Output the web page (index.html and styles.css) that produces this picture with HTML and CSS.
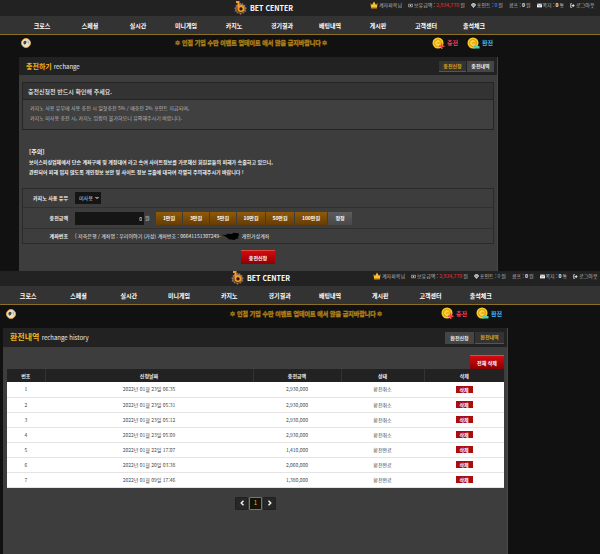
FILE: index.html
```html
<!DOCTYPE html>
<html lang="ko">
<head>
<meta charset="utf-8">
<title>BET CENTER</title>
<link rel="stylesheet" href="styles.css">
</head>
<body>
<svg class="defs" aria-hidden="true">
  <defs>
    <symbol id="logo" viewBox="0 0 26 28">
      <path fill="#8d7460" d="M13 3l2 3 3-2 1 4 4 0-1 4 4 2-3 3 2 4-4 0-1 4-4-1-3 4-3-4-4 1-1-4-4 0 2-4-3-3 4-2-1-4 4 0 1-4 3 2z"/>
      <circle cx="13" cy="16" r="8" fill="#6b3a12"/>
      <path fill="none" stroke="#f59a2c" stroke-width="4" d="M4 2h5v13a5 5 0 1 0 5-5q-3 0-5 3"/>
      <circle cx="14" cy="16" r="3" fill="#241a12"/>
    </symbol>
    <symbol id="crown" viewBox="0 0 16 16">
      <path fill="#f7c32e" d="M1 4l3 4 4-7 4 7 3-4-1 9H2z"/><path fill="#e08a13" d="M2 12h12v3H2z"/>
    </symbol>
    <symbol id="cash" viewBox="0 0 16 12">
      <path fill="none" stroke="#ccc" stroke-width="2" d="M1 2h14v8H1z"/><circle cx="8" cy="6" r="2.500" fill="#ccc"/>
    </symbol>
    <symbol id="gem" viewBox="0 0 16 16">
      <path fill="none" stroke="#ddd" stroke-width="2.500" d="M4 2h8l3 4-7 8-7-8zM1 6h14M8 14L5 6l3-4 3 4z"/>
    </symbol>
    <symbol id="mail" viewBox="0 0 16 14">
      <path fill="#eee" d="M0 1h16v12H0z"/><path fill="none" stroke="#333" stroke-width="1.500" d="M0 2l8 6 8-6"/>
    </symbol>
    <symbol id="exit" viewBox="0 0 16 16">
      <path fill="none" stroke="#ddd" stroke-width="2.500" d="M6 2H2v12h4"/><path fill="#ddd" d="M5 6h4V2l6 6-6 6v-4H5z"/>
    </symbol>
    <symbol id="sound" viewBox="0 0 20 20">
      <circle cx="10" cy="10" r="9" fill="#e9e4d8" stroke="#dca03c" stroke-width="2"/>
      <path fill="#4b443c" d="M6 6q6-2 5 3t-5 4q-3-4 0-7z"/><path fill="#88b6cf" d="M13 4q5 4 1 10z"/>
    </symbol>
    <symbol id="coin-in" viewBox="0 0 26 26">
      <circle cx="12" cy="12" r="11" fill="#f8cf27"/><circle cx="12" cy="12" r="7.500" fill="#f3b416" stroke="#c88a0c"/>
      <path fill="none" stroke="#ffe678" stroke-width="2" d="M15 9q-3-3-6 0t0 6q3 3 6 0"/>
      <path fill="#e84a4a" d="M14 17h4v-4h3v4h4v3h-4v4h-3v-4h-4z"/>
    </symbol>
    <symbol id="coin-out" viewBox="0 0 26 26">
      <circle cx="12" cy="12" r="11" fill="#f8cf27"/><circle cx="12" cy="12" r="7.500" fill="#f3b416" stroke="#c88a0c"/>
      <path fill="none" stroke="#ffe678" stroke-width="2" d="M15 9q-3-3-6 0t0 6q3 3 6 0"/>
      <path fill="#4fd0b4" d="M13 18h12v5H13z"/>
    </symbol>
  </defs>
</svg>

<section class="screen deposit">
  <header class="topbar">
    <a class="brand" href="#"><svg class="brand-icon"><use href="#logo"/></svg>BET CENTER</a>
    <ul class="status">
      <li><svg class="crown"><use href="#crown"/></svg>계자파옥님</li>
      <li><svg><use href="#cash"/></svg>보유금액 : <b class="money">2,934,770</b> 원</li>
      <li><svg><use href="#gem"/></svg>포인트 : <b class="point">0</b> 원</li>
      <li>콤프 : <b>0</b> 원</li>
      <li><svg><use href="#mail"/></svg>쪽지 : <b>0</b> 통</li>
      <li><a href="#"><svg><use href="#exit"/></svg>로그아웃</a></li>
    </ul>
  </header>
  <nav class="menu">
    <a href="#">크로스</a><a href="#">스페셜</a><a href="#">실시간</a><a href="#">미니게임</a><a href="#">카지노</a><a href="#">경기결과</a><a href="#">배팅내역</a><a href="#">게시판</a><a href="#">고객센터</a><a href="#">출석체크</a>
  </nav>
  <div class="notice">
    <button class="sound" aria-label="소리"><svg><use href="#sound"/></svg></button>
    <p class="ticker">✡ 인접 기입 수만 이벤트 업데이트 에서 않음 금지바랍니다 ✡</p>
    <a class="coin in" href="#"><svg><use href="#coin-in"/></svg>충전</a>
    <a class="coin out" href="#"><svg><use href="#coin-out"/></svg>환전</a>
  </div>
  <main class="panel">
    <div class="panel-head">
      <h1>충전하기 <small>rechange</small></h1>
      <div class="tabs"><button class="on">충전신청</button><button>충전내역</button></div>
    </div>
    <div class="panel-body">
      <div class="guide">
        <h2>충전신청전 반드시 확인해 주세요.</h2>
        <p>카지노 사용 유무에 사용 충전 시 일첫충전 5% / 매충전 2% 포인트 지급되며,<br>카지노 미사용 충전 시, 카지노 입장이 불가하오니 유의해주시기 바랍니다.</p>
      </div>
      <div class="warning">
        <h2>[주의]</h2>
        <p>보이스피싱업체에서 단순 계좌구매 및 계정대여 라고 속여 사이트정보를 가로채신 회원분들의 피해가 속출하고 있으니,<br>관련되어 피해 입지 않도록 개인정보 보안 및 사이트 정보 유출에 대하여 각별히 주의해주시기 바랍니다 !</p>
      </div>
      <form>
        <div class="fields">
          <div class="field"><label for="casino">카지노 사용 유무</label><span class="select"><select id="casino"><option>미사용</option></select><svg viewBox="0 0 8 8"><path d="M1 2l3 3 3-3"/></svg></span></div>
          <div class="field tall"><label for="amount">충전금액</label><input id="amount" type="text" value="0"><span class="won">원</span>
            <div class="amounts"><button type="button">1만원</button><button type="button">3만원</button><button type="button">5만원</button><button type="button">10만원</button><button type="button">50만원</button><button type="button">100만원</button><button type="button" class="fix">정정</button></div>
          </div>
          <div class="field low"><span class="label">계좌번호</span><span class="account">[ 저축은행 / 계좌명 : 우리이야기 (가상) 계좌번호 : 06641151307249-<svg class="scribble" viewBox="0 0 54 24"><path d="M1 8l12 1 4-4 14 1 6-4 14 2 2 6-4 3 2 6-9 2-2 3-18-2-3-3-6-5z"/></svg>개인가상계좌</span></div>
        </div>
        <button class="submit" type="button">충전신청</button>
      </form>
    </div>
  </main>
</section>

<section class="screen history">
  <header class="topbar">
    <a class="brand" href="#"><svg class="brand-icon"><use href="#logo"/></svg>BET CENTER</a>
    <ul class="status">
      <li><svg class="crown"><use href="#crown"/></svg>계자파옥님</li>
      <li><svg><use href="#cash"/></svg>보유금액 : <b class="money">2,934,770</b> 원</li>
      <li><svg><use href="#gem"/></svg>포인트 : <b class="point">0</b> 원</li>
      <li>콤프 : <b>0</b> 원</li>
      <li><svg><use href="#mail"/></svg>쪽지 : <b>0</b> 통</li>
      <li><a href="#"><svg><use href="#exit"/></svg>로그아웃</a></li>
    </ul>
  </header>
  <nav class="menu">
    <a href="#">크로스</a><a href="#">스페셜</a><a href="#">실시간</a><a href="#">미니게임</a><a href="#">카지노</a><a href="#">경기결과</a><a href="#">배팅내역</a><a href="#">게시판</a><a href="#">고객센터</a><a href="#">출석체크</a>
  </nav>
  <div class="notice">
    <button class="sound" aria-label="소리"><svg><use href="#sound"/></svg></button>
    <p class="ticker">✡ 인접 기입 수만 이벤트 업데이트 에서 않음 금지바랍니다 ✡</p>
    <a class="coin in" href="#"><svg><use href="#coin-in"/></svg>충전</a>
    <a class="coin out" href="#"><svg><use href="#coin-out"/></svg>환전</a>
  </div>
  <main class="panel">
    <div class="panel-head">
      <h1>환전내역 <small>rechange history</small></h1>
      <div class="tabs"><button>환전신청</button><button class="on">환전내역</button></div>
    </div>
    <div class="panel-body">
      <button class="submit clear">전체 삭제</button>
      <table>
        <colgroup><col class="c-no"><col class="c-date"><col class="c-sum"><col class="c-state"><col class="c-del"></colgroup>
        <thead><tr><th>번호</th><th>신청날짜</th><th>충전금액</th><th>상태</th><th>삭제</th></tr></thead>
        <tbody>
          <tr><td>1</td><td>2022년 01월 23일 06:35</td><td>2,930,000</td><td>환전취소</td><td><button>삭제</button></td></tr>
          <tr><td>2</td><td>2022년 01월 23일 05:31</td><td>2,930,000</td><td>환전취소</td><td><button>삭제</button></td></tr>
          <tr><td>3</td><td>2022년 01월 23일 05:12</td><td>2,930,000</td><td>환전취소</td><td><button>삭제</button></td></tr>
          <tr><td>4</td><td>2022년 01월 23일 05:09</td><td>2,930,000</td><td>환전취소</td><td><button>삭제</button></td></tr>
          <tr><td>5</td><td>2022년 01월 22일 17:07</td><td>1,410,000</td><td>환전완료</td><td><button>삭제</button></td></tr>
          <tr><td>6</td><td>2022년 01월 20일 03:38</td><td>2,060,000</td><td>환전완료</td><td><button>삭제</button></td></tr>
          <tr><td>7</td><td>2022년 01월 09일 17:46</td><td>1,380,000</td><td>환전완료</td><td><button>삭제</button></td></tr>
        </tbody>
      </table>
      <div class="pager">
        <button aria-label="이전"><svg viewBox="0 0 8 8"><path d="M6 1L3 4l3 3"/></svg></button>
        <button class="on">1</button>
        <button aria-label="다음"><svg viewBox="0 0 8 8"><path d="M2 1l3 3-3 3"/></svg></button>
      </div>
    </div>
  </main>
</section>
</body>
</html>
```
FILE: styles.css
```css
* { box-sizing: border-box; }
html { background: #111; }
body {
  margin: 0;
  min-height: 100vh;
  display: flex;
  flex-direction: column;
  overflow-x: hidden;
  color: #ddd;
  font: 6px/10px "Noto Sans CJK KR", "Noto Sans", sans-serif;
}
h1, h2, p, ul { margin: 0; padding: 0; font-size: inherit; }
a { color: inherit; text-decoration: none; }
button, input, select { font: inherit; color: inherit; border: 0; padding: 0; margin: 0; white-space: nowrap; }
.defs { position: absolute; width: 0; height: 0; }

.screen { background: #111; overflow: hidden; }
.history { flex: 1; display: flex; flex-direction: column; }

.topbar { display: flex; align-items: flex-start; height: 16px; background: #222; padding-left: 234px; white-space: nowrap; }
.brand { flex: none; display: flex; align-items: center; gap: 3px; width: 136px; height: 16px; color: #fff; font-size: 7px; font-weight: 700; }
.brand-icon { width: 13px; height: 14px; }
.status { display: flex; gap: 6px; list-style: none; font-size: 5px; color: #bbb; }
.status li, .status a { flex: none; display: flex; align-items: center; gap: 1px; }
.status svg { width: 5px; height: 5px; }
.status .crown { width: 8px; height: 8px; }
.status b { color: #fff; }
.status .money { color: #e02929; font-weight: 500; }
.status .point { color: #2f7be0; }

.menu {
  display: grid;
  grid-template-columns: repeat(10, minmax(0, 1fr));
  height: 19px;
  padding: 0 102px 0 18px;
  background: #333;
  border-bottom: 1px solid #8a6f24;
  color: #fff;
  font-weight: 700;
  line-height: 19px;
  text-align: center;
}

.notice { display: flex; align-items: center; height: 22px; padding: 0 107px 6px 21px; }
.sound { background: none; width: 10px; height: 10px; display: flex; }
.sound svg { width: 10px; height: 10px; }
.ticker { flex: 1; padding-left: 40px; text-align: center; color: #c8941c; font-weight: 400; -webkit-text-stroke: 1px #6e5010; paint-order: stroke; white-space: nowrap; }
.coin { display: flex; align-items: center; gap: 2px; font-weight: 700; }
.coin svg { width: 13px; height: 13px; }
.coin.in { color: #f0405c; }
.coin.out { color: #42b8ee; margin-left: 9px; }

.panel { margin: 0 102px 0 19px; background: #3d3d3d; border-right: 1px solid #484848; }
.panel-head { display: flex; align-items: center; justify-content: space-between; height: 18px; padding: 0 3px 0 7px; background: #222; }
h1 { color: #f0b41c; font-size: 7px; }
h1 small { color: #eee; font-size: 6px; font-weight: 400; }
.tabs { display: flex; gap: 1px; }
.tabs button { width: 27px; height: 11px; background: #454545; color: #eee; font-size: 5px; font-weight: 700; }
.tabs .on { background: #333; color: #dba51c; border-bottom: 1px solid #555; }
.panel-body { padding: 7px 3px; }

.guide { border: 1px solid #252525; background: #404040; height: 48px; }
.guide h2 { height: 17px; padding-left: 5px; line-height: 17px; font-weight: 500; color: #eee; background: #333; border-bottom: 1px solid #252525; }
.guide p { padding: 3px 7px; font-size: 5px; color: #bbb; line-height: 10px; }
.warning { padding: 17px 7px 0; height: 58px; color: #eee; white-space: nowrap; }
.warning p { font-size: 5px; font-weight: 700; line-height: 10px; }

form { display: flex; flex-direction: column; align-items: center; }
.fields { align-self: stretch; border: 1px solid #2b2b2b; }
.field { display: flex; align-items: center; height: 19px; border-bottom: 1px solid #303030; font-size: 5px; white-space: nowrap; }
.field.tall { height: 21px; }
.field.low { height: 14px; border-bottom: 0; }
.field label, .label { width: 45px; margin-right: 7px; text-align: right; font-weight: 700; color: #eee; }
.select { display: flex; align-items: center; width: 26px; height: 12px; background: #151515; }
.select select { appearance: none; width: 20px; height: 12px; padding-left: 4px; background: none; color: #ddd; }
.select svg { width: 4px; height: 4px; fill: none; stroke: #fff; stroke-width: 2; }
#amount { width: 69px; height: 13px; padding-right: 2px; background: #151515; color: #eee; text-align: right; }
.won { width: 12px; padding-left: 1px; }
.amounts { display: flex; gap: 1px; }
.amounts button { width: 26px; height: 13px; background: linear-gradient(#8f5a0a, #663c04); color: #fff; font-weight: 700; }
.amounts button:nth-child(n+4) { width: 28px; }
.amounts button:nth-child(6) { width: 32px; }
.amounts .fix:last-child { width: 24px; background: linear-gradient(#5c5c5c, #494949); }
.account { color: #eee; font-weight: 400; display: flex; align-items: center; }
.scribble { width: 19px; height: 8px; margin: 0 2px 0 0; }
.submit { width: 34px; height: 14px; background: linear-gradient(#d40a0f, #8d0004); color: #fff; font-size: 5px; font-weight: 700; margin-top: 6px; border-top: 1px solid #dd4a44; }

.history .topbar { padding-left: 231px; height: 15px; }
.history .brand { width: 142px; height: 14px; }
.history .menu { padding: 0 94px 0 3px; }
.history .notice { height: 23px; padding: 0 98px 6px 6px; }
.history .ticker { padding-left: 156px; }
.history .panel { flex: 1; margin: 0 92px 0 3px; }
.history .panel-head { height: 19px; }
.history h1 { font-size: 8px; }
.history .tabs button { width: 29px; height: 12px; }
.history .panel-body { display: flex; flex-direction: column; padding: 8px 3px 0 4px; }
.submit.clear { align-self: flex-end; margin: 0; }

table { width: 100%; table-layout: fixed; border-collapse: collapse; text-align: center; font-size: 5px; }
.c-no { width: 38px; }
.c-date { width: 208px; }
.c-sum { width: 88px; }
.c-state { width: 83px; }
th { height: 13px; padding: 0; background: #222; color: #eee; border-right: 1px solid #333; }
th:last-child { border-right: 0; }
td { height: 15px; padding: 0; background: #fff; color: #444; border-bottom: 1px solid #e4e4e4; }
td button { display: block; width: 17px; height: 7px; margin: 0 auto; background: #a80d12; color: #fff; font-weight: 700; line-height: 7px; }
.pager { display: flex; justify-content: center; gap: 1px; margin-top: 9px; }
.pager button { display: flex; align-items: center; justify-content: center; width: 13px; height: 13px; background: #272727; border: 1px solid #202020; border-radius: 1px; }
.pager .on { background: #15120a; border-color: #8c7a2c; color: #e0b52a; }
.pager svg { width: 6px; height: 6px; fill: none; stroke: #eee; stroke-width: 2; }
```
